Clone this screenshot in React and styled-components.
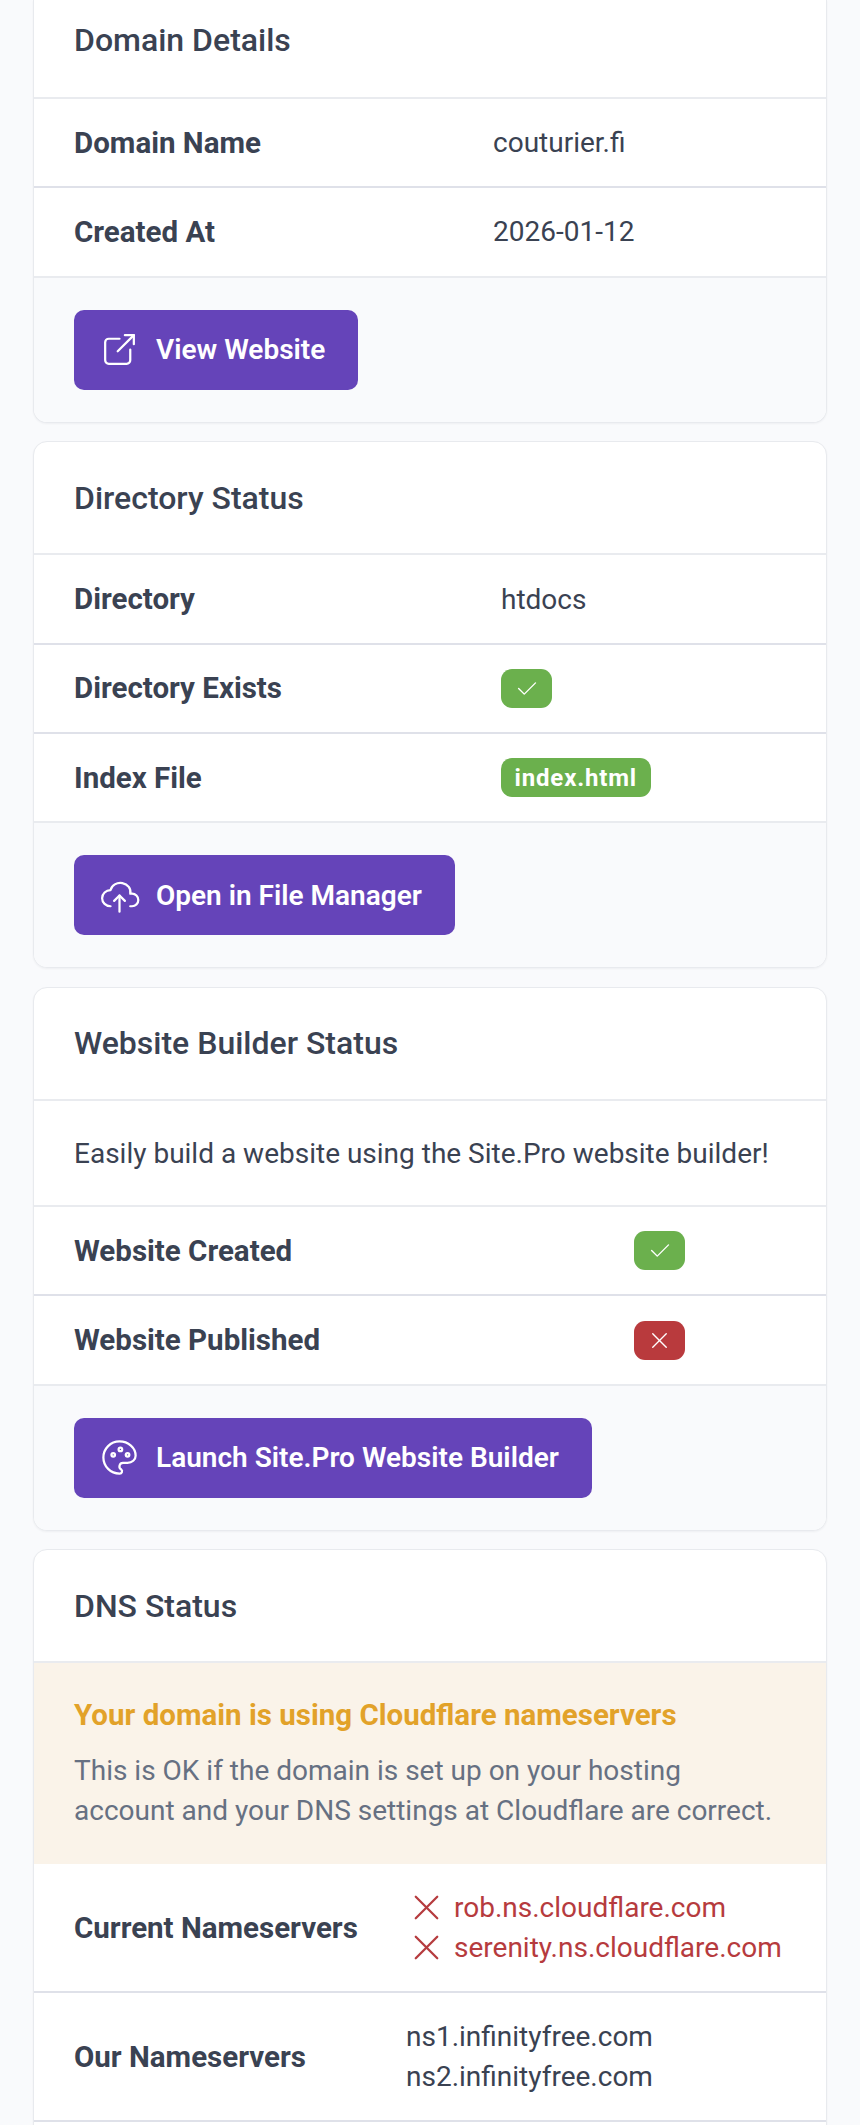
import React from 'react';
import styled, { createGlobalStyle } from 'styled-components';

const GlobalStyle = createGlobalStyle`
  html, body {
    margin: 0;
    height: 2125px;
    overflow: hidden;
    background: #f9fafc;
    font-family: Roboto, "Liberation Sans", sans-serif;
    color: #3a4252;
  }
  * { box-sizing: border-box; }
`;

export default function App() {
  return (
    <>
      <GlobalStyle />
      <Page>
        <Card $clipped>
          <CardHeader $clipped><CardTitle>Domain Details</CardTitle></CardHeader>
          <InfoRow $label={419}>
            <RowLabel>Domain Name</RowLabel>
            <RowValue>couturier.fi</RowValue>
          </InfoRow>
          <InfoRow $label={419}>
            <RowLabel>Created At</RowLabel>
            <RowValue>2026-01-12</RowValue>
          </InfoRow>
          <CardFooter>
            <ActionButton><ExternalLinkIcon />View Website</ActionButton>
          </CardFooter>
        </Card>

        <Card>
          <CardHeader><CardTitle>Directory Status</CardTitle></CardHeader>
          <InfoRow $label={427}>
            <RowLabel>Directory</RowLabel>
            <RowValue>htdocs</RowValue>
          </InfoRow>
          <InfoRow $label={427}>
            <RowLabel>Directory Exists</RowLabel>
            <RowValue><Badge $tone="green"><CheckIcon /></Badge></RowValue>
          </InfoRow>
          <InfoRow $label={427}>
            <RowLabel>Index File</RowLabel>
            <RowValue><Badge $tone="green">index.html</Badge></RowValue>
          </InfoRow>
          <CardFooter>
            <ActionButton><CloudUploadIcon />Open in File Manager</ActionButton>
          </CardFooter>
        </Card>

        <Card>
          <CardHeader><CardTitle>Website Builder Status</CardTitle></CardHeader>
          <Intro>Easily build a website using the Site.Pro website builder!</Intro>
          <InfoRow $label={560}>
            <RowLabel>Website Created</RowLabel>
            <RowValue><Badge $tone="green"><CheckIcon /></Badge></RowValue>
          </InfoRow>
          <InfoRow $label={560}>
            <RowLabel>Website Published</RowLabel>
            <RowValue><Badge $tone="red"><CrossIcon /></Badge></RowValue>
          </InfoRow>
          <CardFooter>
            <ActionButton><PaletteIcon />Launch Site.Pro Website Builder</ActionButton>
          </CardFooter>
        </Card>

        <Card>
          <CardHeader><CardTitle>DNS Status</CardTitle></CardHeader>
          <Notice>
            <NoticeTitle>Your domain is using Cloudflare nameservers</NoticeTitle>
            <NoticeText>
              This is OK if the domain is set up on your hosting account and your DNS settings at Cloudflare are correct.
            </NoticeText>
          </Notice>
          <InfoRow $label={332} $tall>
            <RowLabel>Current Nameservers</RowLabel>
            <RowValue>
              <ServerLine $bad><CrossIcon />rob.ns.cloudflare.com</ServerLine>
              <ServerLine $bad><CrossIcon />serenity.ns.cloudflare.com</ServerLine>
            </RowValue>
          </InfoRow>
          <InfoRow $label={332} $tall>
            <RowLabel>Our Nameservers</RowLabel>
            <RowValue>
              <ServerLine>ns1.infinityfree.com</ServerLine>
              <ServerLine>ns2.infinityfree.com</ServerLine>
            </RowValue>
          </InfoRow>
          <RowTail />
        </Card>
      </Page>
    </>
  );
}

/**
 * Icons
 */
const Icon = ({ children, ...props }) => (
  <svg viewBox="0 0 24 24" fill="none" stroke="currentColor" strokeWidth="1.25" strokeLinecap="round" strokeLinejoin="round" {...props}>
    {children}
  </svg>
);

const ExternalLinkIcon = () => (
  <ButtonIcon as={Icon}>
    <path d="M12 6h-6a2 2 0 0 0 -2 2v10a2 2 0 0 0 2 2h10a2 2 0 0 0 2 -2v-6" />
    <path d="M11 13l9 -9" />
    <path d="M15 4h5v5" />
  </ButtonIcon>
);

const CloudUploadIcon = () => (
  <ButtonIcon as={Icon}>
    <path d="M7 18a4.6 4.4 0 0 1 0 -9a5 4.5 0 0 1 11 2h1a3.5 3.5 0 0 1 0 7h-1" />
    <path d="M9 15l3 -3l3 3" />
    <path d="M12 12l0 9" />
  </ButtonIcon>
);

const PaletteIcon = () => (
  <ButtonIcon as={Icon}>
    <path d="M12 21a9 9 0 0 1 0 -18c4.97 0 9 3.582 9 8c0 1.06 -.474 2.078 -1.318 2.828c-.844 .75 -1.989 1.172 -3.182 1.172h-2.5a2 2 0 0 0 -1 3.75a1.3 1.3 0 0 1 -1 2.25" />
    <path d="M8.5 10.5m-1 0a1 1 0 1 0 2 0a1 1 0 1 0 -2 0" />
    <path d="M12.5 7.5m-1 0a1 1 0 1 0 2 0a1 1 0 1 0 -2 0" />
    <path d="M16.5 10.5m-1 0a1 1 0 1 0 2 0a1 1 0 1 0 -2 0" />
  </ButtonIcon>
);

const CheckIcon = () => (
  <Icon>
    <path d="M5 12l5 5l10 -10" />
  </Icon>
);

const CrossIcon = () => (
  <Icon>
    <path d="M18 6l-12 12" />
    <path d="M6 6l12 12" />
  </Icon>
);

/**
 * Layout
 */
const Page = styled.main`
  display: flex;
  flex-direction: column;
  gap: 18.3px;
  padding: 0 33px;
`;

const Card = styled.section`
  background: #fff;
  border: 1px solid #e8eaee;
  border-top-width: ${(p) => (p.$clipped ? 0 : 1)}px;
  border-radius: ${(p) => (p.$clipped ? '0 0 14px 14px' : '14px')};
  box-shadow: 0 1px 2px rgba(30, 41, 59, 0.05);
  overflow: hidden;
`;

const CardHeader = styled.header`
  display: flex;
  align-items: center;
  height: ${(p) => (p.$clipped ? 99 : 113.5)}px;
  padding: 0 40px ${(p) => (p.$clipped ? 17 : 0)}px;
  border-bottom: 2px solid #e9ebef;
`;

const CardTitle = styled.h3`
  margin: 0;
  font-size: 32px;
  font-weight: 500;
  color: #3a4252;
`;

/**
 * Rows
 */
const InfoRow = styled.div`
  display: grid;
  grid-template-columns: ${(p) => p.$label}px 1fr;
  align-items: center;
  height: ${(p) => (p.$tall ? 129 : 89.3)}px;
  padding-left: 40px;
  border-bottom: 2px solid #dfe1e9;
  font-size: 28px;

  &:has(+ footer) {
    border-bottom-color: #e9ebef;
  }
`;

const RowLabel = styled.div`
  font-size: 29.5px;
  font-weight: 700;
  color: #3a4252;
`;

const RowValue = styled.div`
  color: #3a4252;
`;

const Badge = styled.span`
  display: inline-flex;
  align-items: center;
  justify-content: center;
  height: 39px;
  min-width: 51px;
  padding: 0 13.5px;
  border-radius: 11px;
  background: ${(p) => (p.$tone === 'red' ? '#b93a3d' : '#6bb04d')};
  color: #fff;
  font-size: 24px;
  font-weight: 700;
  letter-spacing: 0.035em;
  vertical-align: middle;

  svg {
    width: 27px;
    height: 27px;
    flex: none;
    margin: 0 -2px;
  }
`;

const Intro = styled.p`
  display: flex;
  align-items: center;
  height: 106px;
  margin: 0;
  padding: 0 40px;
  border-bottom: 2px solid #e9ebef;
  font-size: 28px;
  color: #3a4252;
`;

const Notice = styled.div`
  height: 201px;
  padding: 32px 40px 0;
  background: #faf3e9;
`;

const NoticeTitle = styled.h4`
  margin: 0 0 16px;
  font-size: 29.5px;
  line-height: 40px;
  font-weight: 700;
  color: #e2a229;
`;

const NoticeText = styled.div`
  font-size: 28px;
  line-height: 40px;
  color: #667082;
`;

const ServerLine = styled.div`
  display: flex;
  align-items: center;
  height: 40px;
  color: ${(p) => (p.$bad ? '#b63b3e' : '#3a4252')};

  svg {
    width: 43px;
    height: 43px;
    flex: none;
    margin: 0 6px 0 -1px;
  }
`;

const RowTail = styled.div`
  height: 40px;
`;

/**
 * Footer
 */
const CardFooter = styled.footer`
  padding: 32px 40px;
  background: #f9fafc;
`;

const ActionButton = styled.a`
  display: inline-flex;
  align-items: center;
  height: 80px;
  padding: 0 33px 0 24px;
  border-radius: 10px;
  background: #6544b9;
  color: #fff;
  font-size: 28px;
  font-weight: 600;
`;

const ButtonIcon = styled.svg`
  width: 43px;
  height: 43px;
  flex: none;
  margin-right: 15px;
`;
